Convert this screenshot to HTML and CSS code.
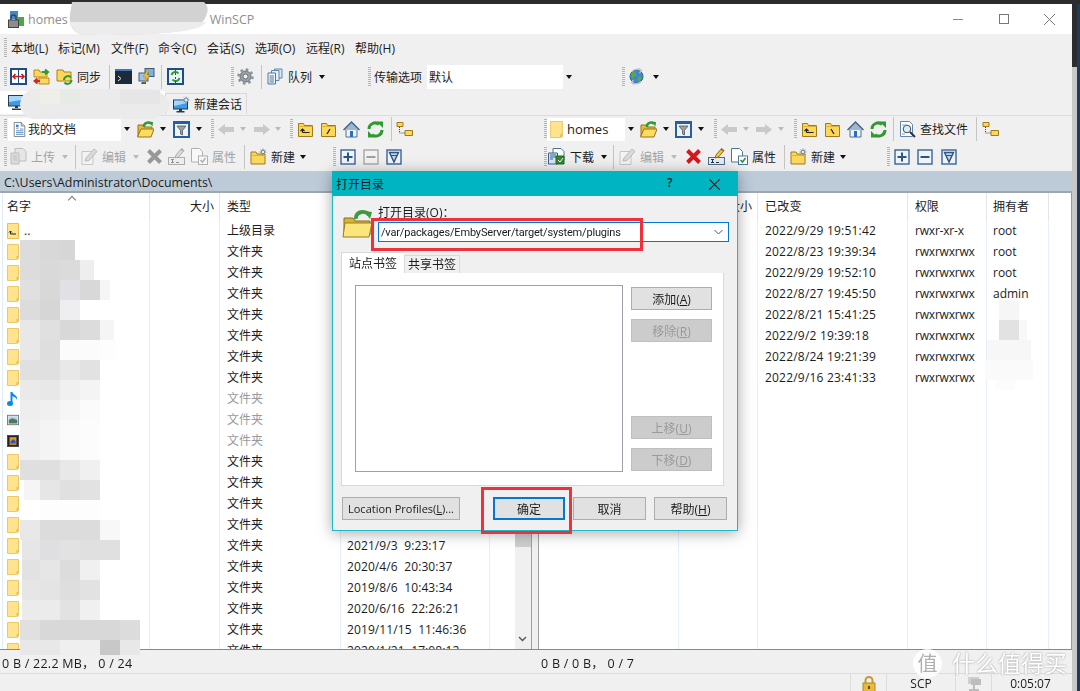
FILE: index.html
```html
<!DOCTYPE html>
<html lang="zh-CN">
<head>
  <meta charset="UTF-8" />
  <title>WinSCP</title>
  <link rel="stylesheet" href="styles.css">
</head>
<body>
<svg class="defs" xmlns="http://www.w3.org/2000/svg">
  <symbol id="i-compare" viewBox="0 0 17 17"><rect x="1" y="1" width="15" height="15" fill="#fff" stroke="#1d4c88" stroke-width="2"/><path d="M8.5 1v15" stroke="#1d4c88"/><path d="M3 8.5h11M5.5 6l-2.5 2.5 2.500 2.500M11.500 6l2.500 2.500-2.500 2.500" fill="none" stroke="#c8201c" stroke-width="1.600"/></symbol>
  <symbol id="i-syncdir" viewBox="0 0 17 17"><path d="M1 2h5l1 2h7v5H1z" fill="#fbd75c" stroke="#b88a1c"/><path d="M6 10h10v6H6z" fill="#fbd75c" stroke="#b88a1c"/><path d="M9 4h5M12 1.500l3 2.500-3 2.500" fill="none" stroke="#2f9a2f" stroke-width="2"/><path d="M7 13H2M4.500 10.500L1.500 13l3 2.500" fill="none" stroke="#d02a20" stroke-width="2"/></symbol>
  <symbol id="i-syncfold" viewBox="0 0 17 17"><path d="M1 2h6l1 2h7v9H1z" fill="#fbd75c" stroke="#a8801c"/><path d="M8 12a4 4 0 0 1 7-2.500M15.500 12a4 4 0 0 1-7 2.500" fill="none" stroke="#2f9a2f" stroke-width="2"/></symbol>
  <symbol id="i-console" viewBox="0 0 17 17"><rect x="0" y="1" width="17" height="15" fill="#1d2a3a"/><rect x="0" y="1" width="17" height="2" fill="#3f78b8"/><path d="M3 8l3 2.500-3 2.500" fill="none" stroke="#e8e8e8"/></symbol>
  <symbol id="i-putty" viewBox="0 0 17 17"><rect x="7" y="0.500" width="9" height="8" fill="#7fb0e0" stroke="#3a5a7a"/><rect x="1" y="5" width="9" height="8" fill="#9cc4ea" stroke="#3a5a7a"/><path d="M4 14h4v2H3z" fill="#555"/><path d="M10 1L5 9h3l-2 6 6-8H9l2-6z" fill="#f2c12e" stroke="#a8801c" stroke-width=".5"/></symbol>
  <symbol id="i-syncbrowse" viewBox="0 0 17 17"><rect x="1" y="1" width="15" height="15" fill="#eaf2fa" stroke="#1d4c88" stroke-width="2"/><path d="M4.500 7a4 4 0 0 1 7-1.500M12.500 10a4 4 0 0 1-7 1.500" fill="none" stroke="#2f9a2f" stroke-width="2"/><path d="M8.500 1v15" stroke="#1d4c88" stroke-dasharray="2 2"/></symbol>
  <symbol id="i-gear" viewBox="0 0 17 17"><circle cx="8.500" cy="8.500" r="5.500" fill="#98a0aa" stroke="#6a7078"/><circle cx="8.500" cy="8.500" r="7" fill="none" stroke="#8a9099" stroke-width="2.400" stroke-dasharray="2.600 2.900"/><circle cx="8.500" cy="8.500" r="2.500" fill="#f0f0f0" stroke="#6a7078"/></symbol>
  <symbol id="i-queue" viewBox="0 0 17 17"><path d="M7.500 1H15v9H7.500z" fill="#dce9f5" stroke="#5d87ad"/><path d="M4.500 2.500H12v10H4.500z" fill="#e8f1fa" stroke="#5d87ad"/><path d="M1 5h7.500v11H1z" fill="#f4f8fc" stroke="#4a769e"/><path d="M2.500 8h4.500M2.500 10h4.500M2.500 12h4.500M2.500 14h4.500" stroke="#4a769e"/></symbol>
  <symbol id="i-globe" viewBox="0 0 17 17"><circle cx="8.500" cy="8.500" r="6.500" fill="#3f88d0" stroke="#2c5f94"/><path d="M5 4c2 0 3 1 3 3s-3 1-3 3-2-1-2-3 1-3 2-3zM10 9c2-1 4 0 3 2s-2 3-3 2 0-3 0-4z" fill="#5eaa3e"/><path d="M4 3.500C6 1 10 .500 13 2.500M10.500.500L13.500 2.500l-2 2.500M13 13.500c-2 2.500-6 3-9 1M6.500 16.500l-3-2 2-2.500" fill="none" stroke="#b8c4d0" stroke-width="1.300"/></symbol>
  <symbol id="i-monitor" viewBox="0 0 17 17"><rect x="0.500" y="1.500" width="16" height="10.500" fill="#3c9ae8" stroke="#2a3a4a"/><path d="M1 2h15v3.500L1 8z" fill="#a8d6f8"/><path d="M7 12h3v2H7zM4 14.500h9V16H4z" fill="#2a3a4a"/></symbol>
  <symbol id="i-newsess" viewBox="0 0 17 17"><rect x="0.500" y="4" width="14" height="9" fill="#3c9ae8" stroke="#2a3a4a"/><path d="M1 4.500h13v2.500L1 10z" fill="#a8d6f8"/><path d="M6 13h3v2H6zM3.500 15h8v1.500h-8z" fill="#2a3a4a"/><path d="M13 .500v7M9.500 4h7M10.500 1.500l5 5M15.500 1.500l-5 5" stroke="#9aa4ae"/><circle cx="13" cy="4" r="2" fill="#e8eef4" stroke="#7a8490"/></symbol>
  <symbol id="i-doc" viewBox="0 0 17 17"><path d="M2.500 .500h8l4 4v12h-12z" fill="#fff" stroke="#7a7a7a"/><path d="M10.500 .500v4h4" fill="#ddd" stroke="#7a7a7a"/><path d="M4.500 3h3v3h-3z" fill="#3f88d0"/><path d="M9 8h4M4.500 10h8.500M4.500 12h8.500M4.500 14h8.500" stroke="#4a88c8"/><path d="M4.500 7.500h3" stroke="#999"/></symbol>
  <symbol id="i-open" viewBox="0 0 17 17"><path d="M1 4h5l1 2h8v3H4L1 15z" fill="#e8bc3a" stroke="#9a7414"/><path d="M4 8h13l-3 8H0.500z" fill="#fbdc60" stroke="#9a7414"/><path d="M7 6a4 4 0 0 1 7-3" fill="none" stroke="#2f9a2f" stroke-width="2.400"/><path d="M11.500 .500l4.500.500-.5 4.500z" fill="#2f9a2f"/></symbol>
  <symbol id="i-filter" viewBox="0 0 17 17"><rect x="1" y="1" width="15" height="15" fill="#eef4fa" stroke="#2460a0" stroke-width="2"/><rect x="1" y="1" width="15" height="2" fill="#2460a0"/><path d="M4 5h9L9.500 9.500V14l-2-1V9.500z" fill="#9aa0a6" stroke="#55595e" stroke-width=".8"/></symbol>
  <symbol id="i-back" viewBox="0 0 18 17"><path d="M1 8.500L8 3v3h9v5H8v3z" fill="#c9c9c9"/></symbol>
  <symbol id="i-fwd" viewBox="0 0 18 17"><path d="M17 8.500L10 3v3H1v5h9v3z" fill="#c9c9c9"/></symbol>
  <symbol id="i-up" viewBox="0 0 17 17"><path d="M1.500 2.500h5l1 2h8v11h-14z" fill="#fbd75c" stroke="#a07a18"/><path d="M1.500 5.500h14" stroke="#e0b030"/><path d="M12.500 11.500h-7M5.500 11.500V8M3.500 10l2-2 2 2" fill="none" stroke="#222" stroke-width="1.200"/></symbol>
  <symbol id="i-root" viewBox="0 0 17 17"><path d="M1.500 2.500h5l1 2h8v11h-14z" fill="#fbd75c" stroke="#a07a18"/><path d="M1.500 5.500h14" stroke="#e0b030"/><path d="M7 8l3 5" stroke="#222" stroke-width="1.300"/></symbol>
  <symbol id="i-rootr" viewBox="0 0 17 17"><path d="M1.500 2.500h5l1 2h8v11h-14z" fill="#fbd75c" stroke="#a07a18"/><path d="M1.500 5.500h14" stroke="#e0b030"/><path d="M10 8l-3 5" stroke="#222" stroke-width="1.300"/></symbol>
  <symbol id="i-home" viewBox="0 0 17 17"><path d="M3 8h11v8H3z" fill="#eef3f8" stroke="#55708c"/><path d="M7 10h3v6H7z" fill="#2a70c0"/><path d="M.500 9L8.500 1l8 8" fill="#9ab8d4" stroke="#47627e" stroke-width="1.400"/></symbol>
  <symbol id="i-refresh" viewBox="0 0 17 17"><path d="M2 8a6 6 0 0 1 10-4.500" fill="none" stroke="#2f9a2f" stroke-width="3"/><path d="M9.500 0.500H16V7z" fill="#2f9a2f"/><path d="M15 9a6 6 0 0 1-10 4.500" fill="none" stroke="#2f9a2f" stroke-width="3"/><path d="M7.500 16.500H1V10z" fill="#2f9a2f"/></symbol>
  <symbol id="i-tree" viewBox="0 0 17 17"><path d="M1 1.500h6v4H1zM9 9.500h7.500v5H9z" fill="#fbd75c" stroke="#a07a18"/><path d="M3.500 6v6H9" fill="none" stroke="#444" stroke-dasharray="1 1"/></symbol>
  <symbol id="i-find" viewBox="0 0 17 17"><path d="M1.500 .500h9l3 3v12h-12z" fill="#fff" stroke="#5d87ad"/><circle cx="8" cy="8" r="3.800" fill="#d8ecfa" stroke="#445"/><path d="M11 11l5 5" stroke="#333" stroke-width="2"/><path d="M3 4h5M3 13h3" stroke="#7a9cc0"/></symbol>
  <symbol id="i-upload" viewBox="0 0 17 17"><path d="M5 .500h8l3 3V13H5z" fill="#e6e6e6" stroke="#bdbdbd"/><path d="M1 5h8v11H1z" fill="#dcdcdc" stroke="#bdbdbd"/><path d="M3 8h4M3 10h4M3 12h4" stroke="#c0c0c0"/></symbol>
  <symbol id="i-download" viewBox="0 0 17 17"><path d="M5 .500h8l3 3V12H5z" fill="#fff" stroke="#4a769e"/><path d="M.500 5h9v11h-9z" fill="#d8e6f4" stroke="#35618c"/><path d="M2 7h6M2 9h6M2 11h3" stroke="#35618c"/><path d="M8 8h8v8H8z" fill="#2f8a2f" stroke="#1f6a1f"/><path d="M10 12l2 2 3-4" fill="none" stroke="#fff"/></symbol>
  <symbol id="i-edit" viewBox="0 0 17 17"><path d="M1 3.500h11v13H1z" fill="#f3f3f3" stroke="#c6c6c6"/><path d="M4 13l1-3 8-9 3 2.500-8 9z" fill="#dadada" stroke="#bcbcbc"/></symbol>
  <symbol id="i-x" viewBox="0 0 17 17"><path d="M2.500 2.500l12 12M14.500 2.500l-12 12" stroke="#d8161c" stroke-width="4"/></symbol>
  <symbol id="i-rename" viewBox="0 0 17 17"><rect x=".5" y="9.500" width="16" height="7" fill="#e4edf6" stroke="#4a6e92"/><path d="M3 11.500h3M4.500 11.500v3M3 14.500h3M8 14.500h3" stroke="#333"/><path d="M7 10l1-3 5.500-6.500 2.500 2L10.500 9z" fill="#f5c638" stroke="#8a6a14"/><path d="M13.500 .5l2.500 2-1 1-2.500-2z" fill="#d84a3a"/></symbol>
  <symbol id="i-props" viewBox="0 0 17 17"><path d="M.500 .500h8l3 3V14h-11z" fill="#fff" stroke="#4a769e"/><rect x="7.500" y="8" width="9" height="8.500" fill="#fff" stroke="#4a769e"/><path d="M9.500 12l2 2 3-4" fill="none" stroke="#2f8a2f" stroke-width="1.500"/></symbol>
  <symbol id="i-new" viewBox="0 0 17 17"><path d="M1 4h5l1 2h8v10H1z" fill="#fbd75c" stroke="#a07a18"/><path d="M1 7.500h14" stroke="#e0b030"/><path d="M13 .5v7M9.500 4h7M10.500 1.500l5 5M15.500 1.500l-5 5" stroke="#8a949e"/><circle cx="13" cy="4" r="1.800" fill="#eee" stroke="#7a8490"/></symbol>
  <symbol id="i-plus" viewBox="0 0 16 16"><rect x="1" y="1" width="14" height="14" fill="#eef4fa" stroke="#3a6494" stroke-width="1.400"/><path d="M3.500 8h9M8 3.500v9" stroke="#2c5484" stroke-width="2"/></symbol>
  <symbol id="i-minus" viewBox="0 0 16 16"><rect x="1" y="1" width="14" height="14" fill="#eef4fa" stroke="#3a6494" stroke-width="1.400"/><path d="M3.500 8h9" stroke="#2c5484" stroke-width="2"/></symbol>
  <symbol id="i-funnel" viewBox="0 0 16 16"><rect x="1" y="1" width="14" height="14" fill="#eef4fa" stroke="#3a6494" stroke-width="1.400"/><path d="M3.500 3.500h9L8 13z" fill="#c3d3e4" stroke="#2c5484" stroke-width="1.400"/><path d="M5 6.500h6" stroke="#2c5484"/></symbol>
  <symbol id="i-folder" viewBox="0 0 12 16"><path d="M.5 .5h11v13.500l-2 1.500H.5z" fill="#ffe38d" stroke="#eec766"/><path d="M9.500 12h2v3.500h-2z" fill="#e8c05a"/></symbol>
  <symbol id="i-folderup" viewBox="0 0 12 16"><path d="M.5 .5h11v15H.5z" fill="#ffe38d" stroke="#e8bd55"/><path d="M9 11H3.500V8M2 9.500l1.500-1.500L5 9.500" fill="none" stroke="#222"/></symbol>
  <symbol id="i-note" viewBox="0 0 12 16"><path d="M4.500 1v11" stroke="#0a8ae0" stroke-width="2"/><ellipse cx="3" cy="12.500" rx="3" ry="2.500" fill="#0a8ae0"/><path d="M5 1c1 3 6 3 5 8-1-3-3-3-5-4z" fill="#0a8ae0"/></symbol>
  <symbol id="i-image" viewBox="0 0 14 16"><rect x=".5" y="2.500" width="13" height="11" fill="#e8edf0" stroke="#6a7178"/><path d="M2 4h10v4H2z" fill="#b8d0e8"/><path d="M2 8l4-2 6 2v4H2z" fill="#4a7a5a"/></symbol>
  <symbol id="i-film" viewBox="0 0 14 16"><rect x=".5" y="1.500" width="13" height="13" fill="#223" stroke="#445"/><path d="M3 3.500h8v9H3z" fill="#d89a28"/><path d="M4 9l3-3 3 2v3H4z" fill="#2a5ab0"/></symbol>
  <symbol id="i-bigfolder" viewBox="0 0 31 29"><path d="M2 9h9l2 3h15v14H2z" fill="#d6b23a" stroke="#8a6e14"/><path d="M3 14h27l-3 14H1z" fill="#fbe67c" stroke="#9a7c1c"/><path d="M14 10a7 6 0 0 1 13-4" fill="none" stroke="#3f9a3f" stroke-width="4"/><path d="M22 2l8 1-2 7z" fill="#3f9a3f"/></symbol>
  <symbol id="i-lock" viewBox="0 0 14 16"><path d="M3.500 7V4.500a3.500 3.500 0 0 1 7 0V7" fill="none" stroke="#c49a2c" stroke-width="2"/><rect x="1" y="7" width="12" height="9" fill="#eab93c" stroke="#b08a20"/><rect x="6" y="10" width="2" height="3" fill="#6a5010"/></symbol>
  <symbol id="i-net" viewBox="0 0 16 16"><rect x="2" y="1" width="11" height="7" fill="#cfcfcf"/><rect x="5" y="3" width="10" height="6" fill="#bdbdbd"/><path d="M8 9v4M3 14h10" stroke="#bbb" stroke-width="2"/></symbol>
  <symbol id="i-app" viewBox="0 0 19 17"><rect x="3" y="0" width="8" height="8" fill="#3f88d0"/><rect x="8" y="6" width="9" height="9" fill="#4aa84a"/><path d="M4 9V6.500a2.500 2.500 0 0 1 5 0V9" fill="none" stroke="#444" stroke-width="1.400"/><rect x="1.500" y="9" width="10" height="7.500" fill="#8d8d8d" stroke="#444"/></symbol>
</svg>

<div class="top-strip"></div>
<div class="desk">
  <div class="window">
    <header class="titlebar">
      <svg class="app-icon"><use href="#i-app"/></svg>
      <span class="title-text">homes</span>
      <span class="title-host"></span>
      <span class="title-text">WinSCP</span>
      <div class="win-btns">
        <span class="win-min"></span>
        <span class="win-max"></span>
        <svg class="win-close" viewBox="0 0 11 11"><path d="M0 0l11 11M11 0L0 11" stroke="#777"/></svg>
      </div>
    </header>

    <nav class="menubar">
      <i class="grip ml4"></i>
      <span class="m1">本地(L)</span>
      <span class="m2">标记(M)</span>
      <span class="m3">文件(F)</span>
      <span class="m4">命令(C)</span>
      <span class="m5">会话(S)</span>
      <span class="m6">选项(O)</span>
      <span class="m7">远程(R)</span>
      <span>帮助(H)</span>
    </nav>

    <div class="toolbar tb-main">
      <div class="band w-a">
        <i class="grip ml4"></i>
        <svg class="ico ml3"><use href="#i-compare"/></svg>
        <svg class="ico ml6"><use href="#i-syncdir"/></svg>
        <svg class="ico ml6"><use href="#i-syncfold"/></svg>
        <span class="lbl ml4">同步</span>
        <i class="sep ml8"></i>
        <svg class="ico ml5"><use href="#i-console"/></svg>
        <svg class="ico ml6"><use href="#i-putty"/></svg>
        <i class="sep ml6"></i>
        <svg class="ico ml5"><use href="#i-syncbrowse"/></svg>
      </div>
      <div class="band w-b">
        <i class="grip"></i>
        <svg class="ico ml3"><use href="#i-gear"/></svg>
        <i class="sep ml7"></i>
        <svg class="ico ml5"><use href="#i-queue"/></svg>
        <span class="lbl ml4">队列</span>
        <i class="caret ml7"></i>
      </div>
      <div class="band w-c">
        <i class="grip"></i>
        <span class="lbl ml3">传输选项</span>
        <div class="combo combo-xfer ml5"><span class="combo-text">默认</span><span class="combo-btn"><i class="caret"></i></span></div>
      </div>
      <div class="band">
        <i class="grip"></i>
        <svg class="ico ml3"><use href="#i-globe"/></svg>
        <i class="caret ml8"></i>
      </div>
    </div>

    <div class="tabs">
      <div class="tab-active"><svg class="ico"><use href="#i-monitor"/></svg></div>
      <div class="tab-new"><svg class="ico"><use href="#i-newsess"/></svg><span class="lbl ml4">新建会话</span></div>
    </div>

    <div class="toolbar tb-nav">
      <div class="pane-bar pane-left">
        <div class="band w-l1">
          <i class="grip ml4"></i>
          <div class="combo combo-local ml1"><svg class="ico-sm ml4"><use href="#i-doc"/></svg><span class="combo-text">我的文档</span><span class="combo-btn"><i class="caret"></i></span></div>
          <svg class="ico ml4"><use href="#i-open"/></svg>
          <i class="caret ml6"></i>
          <svg class="ico ml7"><use href="#i-filter"/></svg>
          <i class="caret ml6"></i>
        </div>
        <div class="band w-l2">
          <i class="grip"></i>
          <svg class="ico-w ml3"><use href="#i-back"/></svg>
          <i class="caret off ml5"></i>
          <svg class="ico-w ml7"><use href="#i-fwd"/></svg>
          <i class="caret off ml4"></i>
        </div>
        <div class="band">
          <i class="grip"></i>
          <svg class="ico ml4"><use href="#i-up"/></svg>
          <svg class="ico ml6"><use href="#i-rootr"/></svg>
          <svg class="ico ml6"><use href="#i-home"/></svg>
          <svg class="ico ml7"><use href="#i-refresh"/></svg>
          <i class="sep ml7"></i>
          <svg class="ico ml4"><use href="#i-tree"/></svg>
        </div>
      </div>
      <div class="pane-bar">
        <div class="band w-r1">
          <i class="grip ml4"></i>
          <div class="combo combo-remote"><svg class="ico-folder"><use href="#i-folder"/></svg><span class="combo-text combo-latin">homes</span><span class="combo-btn"><i class="caret"></i></span></div>
          <svg class="ico ml3"><use href="#i-open"/></svg>
          <i class="caret ml6"></i>
          <svg class="ico ml6"><use href="#i-filter"/></svg>
          <i class="caret ml6"></i>
        </div>
        <div class="band w-r2">
          <i class="grip"></i>
          <svg class="ico-w ml3"><use href="#i-back"/></svg>
          <i class="caret off ml5"></i>
          <svg class="ico-w ml6"><use href="#i-fwd"/></svg>
          <i class="caret off ml5"></i>
        </div>
        <div class="band">
          <i class="grip"></i>
          <svg class="ico ml4"><use href="#i-up"/></svg>
          <svg class="ico ml6"><use href="#i-root"/></svg>
          <svg class="ico ml6"><use href="#i-home"/></svg>
          <svg class="ico ml6"><use href="#i-refresh"/></svg>
          <i class="sep ml6"></i>
          <svg class="ico ml5"><use href="#i-find"/></svg>
          <span class="lbl ml4">查找文件</span>
          <i class="sep ml8"></i>
          <svg class="ico ml5"><use href="#i-tree"/></svg>
        </div>
      </div>
    </div>

    <div class="toolbar tb-act">
      <div class="pane-bar pane-left">
        <div class="band w-l3">
          <i class="grip ml4"></i>
          <svg class="ico ml3"><use href="#i-upload"/></svg>
          <span class="lbl off ml4">上传</span>
          <i class="caret off ml7"></i>
          <i class="sep ml7"></i>
          <svg class="ico ml5"><use href="#i-edit"/></svg>
          <span class="lbl off ml4">编辑</span>
          <i class="caret off ml7"></i>
          <svg class="ico gray ml7"><use href="#i-x"/></svg>
          <svg class="ico gray ml5"><use href="#i-rename"/></svg>
          <svg class="ico gray ml6"><use href="#i-props"/></svg>
          <span class="lbl off ml4">属性</span>
          <i class="sep ml8"></i>
          <svg class="ico ml5"><use href="#i-new"/></svg>
          <span class="lbl ml4">新建</span>
          <i class="caret ml5"></i>
        </div>
        <div class="band">
          <i class="grip"></i>
          <svg class="ico-16 ml4"><use href="#i-plus"/></svg>
          <svg class="ico-16 gray ml7"><use href="#i-minus"/></svg>
          <svg class="ico-16 ml7"><use href="#i-funnel"/></svg>
        </div>
      </div>
      <div class="pane-bar">
        <div class="band w-r3">
          <i class="grip ml4"></i>
          <svg class="ico ml1"><use href="#i-download"/></svg>
          <span class="lbl ml5">下载</span>
          <i class="caret ml7"></i>
          <i class="sep ml6"></i>
          <svg class="ico ml5"><use href="#i-edit"/></svg>
          <span class="lbl off ml4">编辑</span>
          <i class="caret off ml7"></i>
          <svg class="ico ml8"><use href="#i-x"/></svg>
          <svg class="ico ml6"><use href="#i-rename"/></svg>
          <svg class="ico ml6"><use href="#i-props"/></svg>
          <span class="lbl ml4">属性</span>
          <i class="sep ml8"></i>
          <svg class="ico ml5"><use href="#i-new"/></svg>
          <span class="lbl ml4">新建</span>
          <i class="caret ml5"></i>
        </div>
        <div class="band">
          <i class="grip"></i>
          <svg class="ico-16 ml4"><use href="#i-plus"/></svg>
          <svg class="ico-16 ml7"><use href="#i-minus"/></svg>
          <svg class="ico-16 ml8"><use href="#i-funnel"/></svg>
        </div>
      </div>
    </div>

    <div class="pathbar">C:\Users\Administrator\Documents\</div>

    <div class="panels">
      <section class="panel panel-left">
        <div class="list">
          <div class="row head">
            <span class="c-name">名字<i class="sort"></i></span><span class="c-size">大小</span><span class="c-type">类型</span><span class="c-date">已改变</span><span class="c-rest"></span>
          </div>
          <div class="row"><span class="c-name"><svg class="ficon"><use href="#i-folderup"/></svg>..</span><span class="c-size"></span><span class="c-type">上级目录</span><span class="c-date"></span><span class="c-rest"></span></div>
          <div class="row"><span class="c-name"><svg class="ficon"><use href="#i-folder"/></svg></span><span class="c-size"></span><span class="c-type">文件夹</span><span class="c-date"></span><span class="c-rest"></span></div>
          <div class="row"><span class="c-name"><svg class="ficon"><use href="#i-folder"/></svg></span><span class="c-size"></span><span class="c-type">文件夹</span><span class="c-date"></span><span class="c-rest"></span></div>
          <div class="row"><span class="c-name"><svg class="ficon"><use href="#i-folder"/></svg></span><span class="c-size"></span><span class="c-type">文件夹</span><span class="c-date"></span><span class="c-rest"></span></div>
          <div class="row"><span class="c-name"><svg class="ficon"><use href="#i-folder"/></svg></span><span class="c-size"></span><span class="c-type">文件夹</span><span class="c-date"></span><span class="c-rest"></span></div>
          <div class="row"><span class="c-name"><svg class="ficon"><use href="#i-folder"/></svg></span><span class="c-size"></span><span class="c-type">文件夹</span><span class="c-date"></span><span class="c-rest"></span></div>
          <div class="row"><span class="c-name"><svg class="ficon"><use href="#i-folder"/></svg></span><span class="c-size"></span><span class="c-type">文件夹</span><span class="c-date"></span><span class="c-rest"></span></div>
          <div class="row"><span class="c-name"><svg class="ficon"><use href="#i-folder"/></svg></span><span class="c-size"></span><span class="c-type">文件夹</span><span class="c-date"></span><span class="c-rest"></span></div>
          <div class="row dim"><span class="c-name"><svg class="ficon"><use href="#i-note"/></svg></span><span class="c-size"></span><span class="c-type">文件夹</span><span class="c-date"></span><span class="c-rest"></span></div>
          <div class="row dim"><span class="c-name"><svg class="ficon"><use href="#i-image"/></svg></span><span class="c-size"></span><span class="c-type">文件夹</span><span class="c-date"></span><span class="c-rest"></span></div>
          <div class="row dim"><span class="c-name"><svg class="ficon"><use href="#i-film"/></svg></span><span class="c-size"></span><span class="c-type">文件夹</span><span class="c-date"></span><span class="c-rest"></span></div>
          <div class="row"><span class="c-name"><svg class="ficon"><use href="#i-folder"/></svg></span><span class="c-size"></span><span class="c-type">文件夹</span><span class="c-date"></span><span class="c-rest"></span></div>
          <div class="row"><span class="c-name"><svg class="ficon"><use href="#i-folder"/></svg>C</span><span class="c-size"></span><span class="c-type">文件夹</span><span class="c-date"></span><span class="c-rest"></span></div>
          <div class="row"><span class="c-name"><svg class="ficon"><use href="#i-folder"/></svg></span><span class="c-size"></span><span class="c-type">文件夹</span><span class="c-date"></span><span class="c-rest"></span></div>
          <div class="row"><span class="c-name"><svg class="ficon"><use href="#i-folder"/></svg></span><span class="c-size"></span><span class="c-type">文件夹</span><span class="c-date"></span><span class="c-rest"></span></div>
          <div class="row"><span class="c-name"><svg class="ficon"><use href="#i-folder"/></svg></span><span class="c-size"></span><span class="c-type">文件夹</span><span class="c-date">2021/9/3&nbsp;&nbsp;9:23:17</span><span class="c-rest"></span></div>
          <div class="row"><span class="c-name"><svg class="ficon"><use href="#i-folder"/></svg></span><span class="c-size"></span><span class="c-type">文件夹</span><span class="c-date">2020/4/6&nbsp;&nbsp;20:30:37</span><span class="c-rest"></span></div>
          <div class="row"><span class="c-name"><svg class="ficon"><use href="#i-folder"/></svg></span><span class="c-size"></span><span class="c-type">文件夹</span><span class="c-date">2019/8/6&nbsp;&nbsp;10:43:34</span><span class="c-rest"></span></div>
          <div class="row"><span class="c-name"><svg class="ficon"><use href="#i-folder"/></svg></span><span class="c-size"></span><span class="c-type">文件夹</span><span class="c-date">2020/6/16&nbsp;&nbsp;22:26:21</span><span class="c-rest"></span></div>
          <div class="row"><span class="c-name"><svg class="ficon"><use href="#i-folder"/></svg></span><span class="c-size"></span><span class="c-type">文件夹</span><span class="c-date">2019/11/15&nbsp;&nbsp;11:46:36</span><span class="c-rest"></span></div>
          <div class="row"><span class="c-name"><svg class="ficon"><use href="#i-folder"/></svg></span><span class="c-size"></span><span class="c-type">文件夹</span><span class="c-date">2020/1/21&nbsp;&nbsp;17:08:12</span><span class="c-rest"></span></div>
        </div>
        <div class="scrollbar"><div class="thumb"></div><svg class="scroll-down" viewBox="0 0 9 6"><path d="M1 1l3.500 3.500L8 1" fill="none" stroke="#555" stroke-width="1.400"/></svg></div>
      </section>
      <div class="splitter"></div>
      <section class="panel panel-right">
        <div class="list">
          <div class="row head">
            <span class="c-name"></span><span class="c-size">大小</span><span class="c-date">已改变</span><span class="c-perm">权限</span><span class="c-owner">拥有者</span><span class="c-rest"></span>
          </div>
          <div class="row"><span class="c-name"></span><span class="c-size"></span><span class="c-date">2022/9/29 19:51:42</span><span class="c-perm">rwxr-xr-x</span><span class="c-owner">root</span><span class="c-rest"></span></div>
          <div class="row"><span class="c-name"></span><span class="c-size"></span><span class="c-date">2022/8/23 19:39:34</span><span class="c-perm">rwxrwxrwx</span><span class="c-owner">root</span><span class="c-rest"></span></div>
          <div class="row"><span class="c-name"></span><span class="c-size"></span><span class="c-date">2022/9/29 19:52:10</span><span class="c-perm">rwxrwxrwx</span><span class="c-owner">root</span><span class="c-rest"></span></div>
          <div class="row"><span class="c-name"></span><span class="c-size"></span><span class="c-date">2022/8/27 19:45:50</span><span class="c-perm">rwxrwxrwx</span><span class="c-owner">admin</span><span class="c-rest"></span></div>
          <div class="row"><span class="c-name"></span><span class="c-size"></span><span class="c-date">2022/8/21 15:41:25</span><span class="c-perm">rwxrwxrwx</span><span class="c-owner"></span><span class="c-rest"></span></div>
          <div class="row"><span class="c-name"></span><span class="c-size"></span><span class="c-date">2022/9/2 19:39:18</span><span class="c-perm">rwxrwxrwx</span><span class="c-owner"></span><span class="c-rest"></span></div>
          <div class="row"><span class="c-name"></span><span class="c-size"></span><span class="c-date">2022/8/24 19:21:39</span><span class="c-perm">rwxrwxrwx</span><span class="c-owner"></span><span class="c-rest"></span></div>
          <div class="row"><span class="c-name"></span><span class="c-size"></span><span class="c-date">2022/9/16 23:41:33</span><span class="c-perm">rwxrwxrwx</span><span class="c-owner"></span><span class="c-rest"></span></div>
          <div class="row fill"><span class="c-name"></span><span class="c-size"></span><span class="c-date"></span><span class="c-perm"></span><span class="c-owner"></span><span class="c-rest"></span></div>
        </div>
      </section>
    </div>

    <div class="status-top">
      <span class="st-left">0 B / 22.2 MB， 0 / 24</span>
      <span class="st-right">0 B / 0 B， 0 / 7</span>
    </div>
    <footer class="status-bottom">
      <span class="sb-fill"></span>
      <span class="sb-cell sb-lock"><svg class="ico-lock"><use href="#i-lock"/></svg></span>
      <span class="sb-cell sb-proto">SCP</span>
      <span class="sb-cell sb-net"><svg class="ico-16"><use href="#i-net"/></svg></span>
      <span class="sb-cell sb-time">0:05:07</span>
    </footer>
  </div>
  <div class="edge"></div>
</div>

<!-- privacy mosaics painted over the screenshot -->
<svg class="mosaic m-title" viewBox="0 0 142 34"><path d="M4 0h132q6 6 2 14-4 16-60 18-50 2-66 0Q0 28 2 12z" fill="#d2d2d2"/><path d="M2 20h136q-4 10-60 12-50 2-66 0-8-4-10-12z" fill="#ececec"/></svg>
<svg class="mosaic m-tab" viewBox="0 0 152 32"><path d="M12 1h122q14 6 16 15-2 10-16 15H12Q0 26 0 16 0 6 12 1z" fill="#ebebeb"/><rect x="20" y="2" width="20" height="14" fill="#efeee8"/><rect x="40" y="2" width="20" height="14" fill="#e6ebe6"/><rect x="100" y="2" width="40" height="14" fill="#e6e6e6"/></svg>
<svg class="mosaic m-left" viewBox="0 0 125 415" shape-rendering="crispEdges">
  <g fill="#dcdcdc"><rect x="0" y="0" width="20" height="20"/><rect x="0" y="20" width="20" height="20"/></g>
  <rect x="20" y="0" width="20" height="20" fill="#d8d8d8"/><rect x="40" y="0" width="15" height="20" fill="#d6d6d6"/>
  <rect x="20" y="20" width="20" height="20" fill="#d9d9d9"/><rect x="40" y="20" width="20" height="20" fill="#dbdbdb"/><rect x="60" y="20" width="14" height="20" fill="#eeeeee"/>
  <rect x="0" y="40" width="20" height="20" fill="#e0e0e0"/><rect x="20" y="40" width="20" height="20" fill="#d8d8d8"/><rect x="40" y="40" width="20" height="20" fill="#e0e0e5"/><rect x="60" y="40" width="20" height="20" fill="#d8d8d8"/><rect x="80" y="40" width="10" height="20" fill="#f5f5f5"/>
  <rect x="0" y="60" width="20" height="20" fill="#dcdcdc"/><rect x="20" y="60" width="20" height="20" fill="#d6d6d6"/><rect x="40" y="60" width="20" height="20" fill="#eeeef0"/>
  <rect x="0" y="80" width="20" height="20" fill="#e8e8e8"/><rect x="20" y="80" width="20" height="20" fill="#e0e0e0"/><rect x="40" y="80" width="20" height="20" fill="#d8d8d8"/><rect x="60" y="80" width="20" height="20" fill="#dcdcdc"/><rect x="80" y="80" width="14" height="20" fill="#f5f5f5"/>
  <rect x="0" y="100" width="20" height="20" fill="#e8e8e8"/><rect x="20" y="100" width="20" height="20" fill="#dedede"/><rect x="40" y="100" width="40" height="20" fill="#fbfbfb"/><rect x="80" y="100" width="16" height="20" fill="#fdfdfd"/>
  <rect x="0" y="120" width="40" height="20" fill="#e0e0e0"/><rect x="40" y="120" width="20" height="20" fill="#e8e8e8"/><rect x="60" y="120" width="20" height="20" fill="#e2e2e2"/>
  <rect x="0" y="140" width="20" height="20" fill="#eaeaea"/><rect x="20" y="140" width="20" height="20" fill="#e8e8e8"/><rect x="40" y="140" width="20" height="20" fill="#f0f0f0"/><rect x="60" y="140" width="20" height="20" fill="#f4f4f4"/>
  <rect x="0" y="160" width="20" height="20" fill="#eeeeee"/><rect x="20" y="160" width="20" height="20" fill="#f0f0f0"/><rect x="40" y="160" width="20" height="20" fill="#f6f6f6"/><rect x="60" y="160" width="20" height="20" fill="#fbfbfb"/>
  <rect x="0" y="180" width="20" height="40" fill="#f0f0f0"/><rect x="20" y="180" width="20" height="40" fill="#f4f4f4"/><rect x="40" y="180" width="20" height="40" fill="#fafafa"/><rect x="60" y="180" width="20" height="40" fill="#fcfcfc"/>
  <rect x="0" y="220" width="40" height="20" fill="#dfdfdf"/><rect x="40" y="220" width="20" height="20" fill="#e8e8e8"/><rect x="60" y="220" width="20" height="20" fill="#f0f0f0"/>
  <rect x="4" y="240" width="16" height="20" fill="#f5f5f5"/><rect x="20" y="240" width="20" height="20" fill="#e6e6e6"/><rect x="40" y="240" width="20" height="20" fill="#e0e0e0"/><rect x="60" y="240" width="20" height="20" fill="#e2e2e2"/>
  <rect x="20" y="260" width="60" height="20" fill="#fdfdfd"/>
  <rect x="0" y="280" width="20" height="20" fill="#e8e8e8"/><rect x="20" y="280" width="60" height="20" fill="#dcdcdc"/><rect x="80" y="280" width="20" height="20" fill="#f8f8f8"/>
  <rect x="2" y="300" width="18" height="20" fill="#e6e6e6"/><rect x="20" y="300" width="20" height="20" fill="#dfdfe2"/><rect x="40" y="300" width="20" height="20" fill="#e2e2e2"/><rect x="60" y="300" width="40" height="20" fill="#e0e0e0"/>
  <rect x="2" y="320" width="18" height="20" fill="#e2e2e2"/><rect x="20" y="320" width="20" height="20" fill="#e6e6e6"/><rect x="40" y="320" width="20" height="20" fill="#dcdcdc"/><rect x="60" y="320" width="20" height="20" fill="#f0f0f0"/>
  <rect x="2" y="340" width="18" height="20" fill="#e6e6e6"/><rect x="20" y="340" width="20" height="20" fill="#e4e4e4"/><rect x="40" y="340" width="20" height="20" fill="#dedede"/><rect x="60" y="340" width="20" height="20" fill="#e2e2e2"/>
  <rect x="2" y="360" width="38" height="20" fill="#ebebeb"/><rect x="40" y="360" width="20" height="20" fill="#e2e2e2"/><rect x="60" y="360" width="20" height="20" fill="#f0f0f0"/>
  <rect x="0" y="380" width="20" height="20" fill="#e0e0e0"/><rect x="20" y="380" width="80" height="20" fill="#d8d8d8"/><rect x="100" y="380" width="20" height="20" fill="#dcdcdc"/>
  <rect x="0" y="400" width="40" height="15" fill="#e8e8e8"/><rect x="40" y="400" width="20" height="15" fill="#efefef"/><rect x="80" y="400" width="20" height="15" fill="#c8c8c8"/><rect x="60" y="400" width="20" height="15" fill="#efefef"/><rect x="100" y="400" width="20" height="15" fill="#e8e8e8"/>
</svg>
<svg class="mosaic m-owner" viewBox="0 0 48 90" shape-rendering="crispEdges"><rect x="14" y="0" width="20" height="20" fill="#f6f6f6"/><rect x="14" y="20" width="20" height="20" fill="#e2e2e2"/><rect x="34" y="20" width="8" height="20" fill="#f8f8f8"/><rect x="2" y="40" width="44" height="20" fill="#f7f7f7"/><rect x="0" y="60" width="48" height="20" fill="#fafafa"/><rect x="10" y="80" width="20" height="10" fill="#fcfcfc"/></svg>

<div class="dialog">
  <div class="dlg-title">
    <span>打开目录</span>
    <span class="dlg-help">?</span>
    <svg class="dlg-close" viewBox="0 0 11 11"><path d="M0 0l11 11M11 0L0 11" stroke="#222" stroke-width="1.100"/></svg>
  </div>
  <div class="dlg-head">
    <svg class="dlg-folder"><use href="#i-bigfolder"/></svg>
    <div class="dlg-field">
      <label class="dlg-label">打开目录(<u>O</u>)：</label>
      <div class="dlg-input"><span>/var/packages/EmbyServer/target/system/plugins</span><svg class="dlg-chev" viewBox="0 0 9 6"><path d="M.5 1l4 4 4-4" fill="none" stroke="#555"/></svg></div>
    </div>
  </div>
  <div class="dlg-tabs">
    <span class="dlg-tab on">站点书签</span>
    <span class="dlg-tab">共享书签</span>
  </div>
  <div class="dlg-pane">
    <div class="dlg-list"></div>
    <div class="dlg-side">
      <div class="dlg-group">
        <button class="btn side-btn">添加(<u>A</u>)</button>
        <button class="btn side-btn" disabled>移除(<u>R</u>)</button>
      </div>
      <div class="dlg-group">
        <button class="btn side-btn" disabled>上移(<u>U</u>)</button>
        <button class="btn side-btn" disabled>下移(<u>D</u>)</button>
      </div>
    </div>
  </div>
  <div class="dlg-foot">
    <button class="btn btn-prof">Location Profiles(<u>L</u>)...</button>
    <button class="btn btn-foot btn-ok">确定</button>
    <button class="btn btn-foot">取消</button>
    <button class="btn btn-foot">帮助(<u>H</u>)</button>
  </div>
</div>

<div class="redbox red-path"></div>
<div class="redbox red-ok"></div>

<div class="watermark"><span class="wm-badge">值</span><span class="wm-text">什么值得买</span></div>
</body>
</html>
```

FILE: styles.css
```css
* {
  box-sizing: border-box;
}
html, body {
  margin: 0;
  height: 691px;
  overflow: hidden;
}
body {
  position: relative;
  width: 1080px;
  background: #1d3b5e;
  font-family: "Open Sans", "Noto Sans CJK SC", sans-serif;
  font-size: 12px;
  color: #1c1c1c;
}
.defs {
  position: absolute;
  width: 0;
  height: 0;
}
.top-strip {
  height: 4px;
  background: #2c2c2e;
}
.desk {
  display: flex;
  height: 687px;
}
.window {
  width: 1072px;
  height: 687px;
  background: #f0f0f0;
  display: flex;
  flex-direction: column;
  filter: blur(0.3px);
}
.edge {
  width: 5px;
  background: linear-gradient(to bottom, #2c2c2e 0 63px, #c8c8c8 63px);
}

/* title + menu */
.titlebar {
  height: 30px;
  background: #fff;
  display: flex;
  align-items: center;
  flex: none;
}
.app-icon {
  width: 19px;
  height: 17px;
  margin: 0 2px 0 7px;
}
.title-text {
  color: #8e8e8e;
  font-size: 12.500px;
  font-family: "Open Sans", sans-serif;
}
.title-host {
  width: 142px;
}
.win-btns {
  margin-left: auto;
  display: flex;
  align-items: center;
}
.win-min {
  width: 10px;
  height: 1px;
  background: #888;
  margin-right: 36px;
}
.win-max {
  width: 10px;
  height: 10px;
  border: 1px solid #777;
  margin-right: 35px;
}
.win-close {
  width: 11px;
  height: 11px;
  margin-right: 17px;
}
.menubar {
  height: 28px;
  flex: none;
  display: flex;
  align-items: center;
  white-space: nowrap;
}
.menubar .grip {
  margin-right: 4px;
}
.m1 { width: 47px; }
.m2 { width: 53px; }
.m3 { width: 47px; }
.m4 { width: 49px; }
.m5 { width: 48px; }
.m6 { width: 51px; }
.m7 { width: 49px; }

/* toolbars */
.toolbar {
  display: flex;
  align-items: center;
  flex: none;
}
.tb-main { height: 29px; }
.tb-nav { height: 27px; margin-top: 1px; border-top: 1px solid #dcdcdc; }
.tb-act { height: 29px; }
.pane-bar {
  display: flex;
  align-items: center;
  height: 100%;
}
.pane-left { width: 540px; }
.band {
  display: flex;
  align-items: center;
  height: 100%;
  flex: none;
  white-space: nowrap;
}
.w-a { width: 231px; }
.w-b { width: 137px; }
.w-c { width: 254px; }
.w-l1 { width: 211px; }
.w-l2 { width: 79px; }
.w-l3 { width: 333px; }
.w-r1 { width: 174px; }
.w-r2 { width: 80px; }
.w-r3 { width: 347px; }
.grip {
  display: block;
  width: 3px;
  height: 20px;
  flex: none;
  background: repeating-linear-gradient(to bottom, #b4b4b4 0 1px, #f0f0f0 1px 2px);
}
.sep {
  display: block;
  width: 1px;
  height: 24px;
  flex: none;
  background: #c4c4c4;
}
.ico { width: 17px; height: 17px; flex: none; }
.ico-w { width: 18px; height: 17px; flex: none; }
.ico-16 { width: 16px; height: 16px; flex: none; }
.ico-sm { width: 15px; height: 17px; flex: none; }
.ico-folder { width: 13px; height: 17px; margin-left: 3px; flex: none; }
.gray { filter: grayscale(1) opacity(.5); }
.lbl { flex: none; }
.lbl.off { color: #a4a4a4; }
.caret {
  display: block;
  flex: none;
  width: 0;
  height: 0;
  border: 3.500px solid transparent;
  border-top: 4px solid #111;
  border-bottom: 0;
}
.caret.off { border-top-color: #bbb; }
.ml1 { margin-left: 1px; }
.ml3 { margin-left: 3px; }
.ml4 { margin-left: 4px; }
.ml5 { margin-left: 5px; }
.ml6 { margin-left: 6px; }
.ml7 { margin-left: 7px; }
.ml8 { margin-left: 8px; }
.combo {
  display: flex;
  align-items: center;
  background: #fff;
  height: 23px;
  flex: none;
}
.combo-xfer { width: 148px; height: 24px; }
.combo-local { width: 125px; }
.combo-local .combo-text { padding-left: 1px; }
.combo-remote { width: 90px; }
.combo-text {
  flex: 1;
  padding-left: 2px;
  font-size: 12px;
}
.combo-latin {
  padding-left: 4px;
  font-size: 13px;
}
.combo-btn {
  width: 12px;
  height: 100%;
  background: #f0f0f0;
  display: flex;
  align-items: center;
  justify-content: center;
}
.tabs {
  height: 23px;
  flex: none;
  display: flex;
  align-items: flex-end;
}
.tab-active {
  width: 165px;
  height: 23px;
  background: #fff;
  display: flex;
  align-items: center;
  padding-left: 8px;
}
.tab-new {
  width: 82px;
  height: 21px;
  border: 1px solid #d9d9d9;
  border-bottom: 0;
  display: flex;
  align-items: center;
  padding-left: 7px;
}

/* panels */
.pathbar {
  height: 22px;
  flex: none;
  background: #bdcbd9;
  border-bottom: 2px solid #9ea7b0;
  padding-left: 4px;
  line-height: 24px;
  font-size: 12.400px;
}
.panels {
  height: 457px;
  flex: none;
  display: flex;
  background: #fff;
  border-bottom: 1px solid #85888c;
}
.panel {
  display: flex;
  overflow: hidden;
}
.panel-left {
  width: 532px;
  border-right: 1px solid #a0a0a0;
  padding-left: 2px;
}
.panel-left .list {
  width: 513px;
  border-left: 1px solid #e2ecf7;
}
.panel-right {
  flex: 1;
  border-left: 1px solid #a0a0a0;
  border-right: 1px solid #9a9a9a;
}
.splitter {
  width: 6px;
  background: #f0f0f0;
}
.list {
  overflow: hidden;
  flex: 1;
}
.row {
  display: flex;
  height: 21px;
  line-height: 21px;
  white-space: nowrap;
}
.row > span {
  flex: none;
  height: 100%;
  padding-left: 7px;
  border-right: 1px solid #e6eff9;
}
.row.fill { height: 300px; }
.row.head {
  height: 27px;
  line-height: 28px;
}
.row.head > span {
  border-right-color: #e5e5e5;
  position: relative;
}
.row.dim .c-type { color: #9a9a9a; }
.panel-left .c-name { width: 147px; padding-left: 4px; display: flex; align-items: center; }
.panel-left .c-size { width: 70px; text-align: right; padding: 0 5px 0 0; }
.panel-left .c-type { width: 121px; }
.panel-left .c-date { width: 149px; padding-left: 6px; letter-spacing: 0.1px; }
.panel-left .c-rest { flex: 1; border-right: 0; }
.panel-right .c-name { width: 140px; }
.panel-right .c-size { width: 79px; text-align: right; padding: 0 5px 0 0; }
.panel-right .c-date { width: 150px; padding-left: 7px; letter-spacing: 0.2px; }
.panel-right .c-perm { width: 79px; padding-left: 7px; letter-spacing: -0.2px; }
.panel-right .c-owner { width: 62px; padding-left: 6px; }
.panel-right .c-rest { flex: 1; border-right: 0; }
.ficon {
  width: 12px;
  height: 16px;
  margin-right: 5px;
  flex: none;
}
.sort {
  position: absolute;
  left: 66px;
  top: 4px;
  width: 6px;
  height: 6px;
  border-top: 1px solid #777;
  border-left: 1px solid #777;
  transform: rotate(45deg);
}
.row.head .c-name {
  padding-left: 4px;
}
.scrollbar {
  width: 16px;
  background: #f0f0f0;
  position: relative;
}
.thumb {
  height: 354px;
  background: #cdcdcd;
  margin-top: 0;
}
.scroll-down {
  position: absolute;
  left: 3px;
  bottom: 7px;
  width: 9px;
  height: 6px;
}

/* status */
.status-top {
  height: 24px;
  flex: none;
  display: flex;
  align-items: center;
  border-bottom: 1px solid #dcdcdc;
  font-size: 12.500px;
  letter-spacing: 0.25px;
  padding-top: 2px;
}
.st-left { width: 541px; padding-left: 2px; }
.status-bottom {
  flex: 1;
  display: flex;
}
.sb-fill { width: 850px; }
.sb-cell {
  border-left: 1px solid #dcdcdc;
  display: flex;
  align-items: center;
  justify-content: center;
  height: 100%;
  overflow: hidden;
  padding-top: 1px;
}
.sb-lock { width: 36px; }
.sb-proto { width: 69px; }
.sb-net { width: 36px; }
.sb-time { width: 81px; padding-right: 3px; }
.ico-lock { width: 14px; height: 16px; }

/* dialog */
.dialog {
  position: absolute;
  left: 332px;
  top: 171px;
  width: 406px;
  height: 360px;
  background: #f0f0f0;
  border: 1px solid #1fb9c6;
  border-top: 0;
  box-shadow: 0 2px 14px rgba(0, 0, 0, 0.35);
  display: flex;
  flex-direction: column;
}
.dlg-title {
  height: 25px;
  flex: none;
  margin: 0 -1px;
  background: #00b4c2;
  display: flex;
  align-items: center;
  padding-left: 4px;
  position: relative;
}
.dlg-help {
  position: absolute;
  left: 335px;
  top: 3px;
  font-weight: 600;
}
.dlg-close {
  position: absolute;
  left: 377px;
  top: 8px;
  width: 11px;
  height: 11px;
}
.dlg-head {
  display: flex;
  height: 56px;
  flex: none;
  padding-left: 9px;
}
.dlg-folder {
  width: 31px;
  height: 29px;
  margin-top: 13px;
  flex: none;
}
.dlg-field {
  margin-left: 5px;
  flex: none;
}
.dlg-label {
  display: block;
  height: 26px;
  line-height: 33px;
  font-size: 12px;
}
.dlg-input {
  width: 351px;
  height: 20px;
  background: #fff;
  border: 1px solid #0078d7;
  display: flex;
  align-items: center;
  justify-content: space-between;
  padding: 0 5px 0 2px;
  font-family: Roboto, sans-serif;
  font-size: 11px;
  letter-spacing: -0.17px;
  white-space: nowrap;
}
.dlg-chev {
  width: 9px;
  height: 6px;
}
.dlg-tabs {
  display: flex;
  align-items: flex-end;
  height: 21px;
  flex: none;
  margin-left: 8px;
}
.dlg-tab {
  width: 56px;
  height: 18px;
  line-height: 18px;
  text-align: center;
  background: #f0f0f0;
  border: 1px solid #d9d9d9;
  border-bottom: 0;
}
.dlg-tab.on {
  width: 63px;
  height: 21px;
  line-height: 21px;
  background: #fff;
  border-right: 0;
}
.dlg-pane {
  width: 383px;
  height: 213px;
  flex: none;
  margin-left: 8px;
  background: #fff;
  border: 1px solid #d9d9d9;
  border-top: 0;
  padding: 12px 0 0 13px;
  display: flex;
}
.dlg-list {
  width: 268px;
  height: 187px;
  border: 1px solid #a0a0a8;
  border-bottom-width: 1px;
  background: #fff;
}
.dlg-side {
  margin-left: 8px;
  width: 81px;
  height: 186px;
  padding-top: 2px;
  display: flex;
  flex-direction: column;
  justify-content: space-between;
}
.dlg-group {
  display: flex;
  flex-direction: column;
  gap: 9px;
}
.btn {
  font: inherit;
  color: #1c1c1c;
  background: #e1e1e1;
  border: 1px solid #adadad;
  padding: 0;
  height: 23px;
  white-space: nowrap;
}
.btn u {
  text-underline-offset: 1px;
}
.btn:disabled {
  background: #cccccc;
  border-color: #bfbfbf;
  color: #999;
}
.side-btn {
  width: 81px;
}
.dlg-foot {
  display: flex;
  margin: 11px 0 0 9px;
}
.btn-prof {
  width: 118px;
  font-size: 11px;
  margin-right: 33px;
}
.btn-foot {
  width: 73px;
  margin-right: 8px;
}
.btn-ok {
  border: 2px solid #0078d7;
  width: 72px;
}
.redbox {
  position: absolute;
  border: 3px solid #f0303a;
}
.red-path {
  left: 371px;
  top: 218px;
  width: 272px;
  height: 33px;
}
.red-ok {
  left: 481px;
  top: 487px;
  width: 91px;
  height: 47px;
}

/* blur patches from the screenshot */
.mosaic {
  position: absolute;
  filter: blur(0.6px);
}
.m-title { left: 68px; top: 2px; width: 142px; height: 34px; }
.m-tab { left: 20px; top: 88px; width: 152px; height: 32px; }
.m-left { left: 20px; top: 240px; width: 125px; height: 415px; }
.m-owner { left: 985px; top: 300px; width: 48px; height: 90px; }
.watermark {
  position: absolute;
  left: 913px;
  top: 649px;
  display: flex;
  align-items: center;
}
.wm-badge {
  width: 29px;
  height: 29px;
  border-radius: 50%;
  background: rgba(255, 255, 255, 0.85);
  color: #b0b0b0;
  font-size: 20px;
  line-height: 29px;
  text-align: center;
}
.wm-text {
  margin-left: 10px;
  font-size: 23px;
  line-height: 29px;
  color: #fff;
  text-shadow: 0 0 2px #8c8c8c;
}
```
